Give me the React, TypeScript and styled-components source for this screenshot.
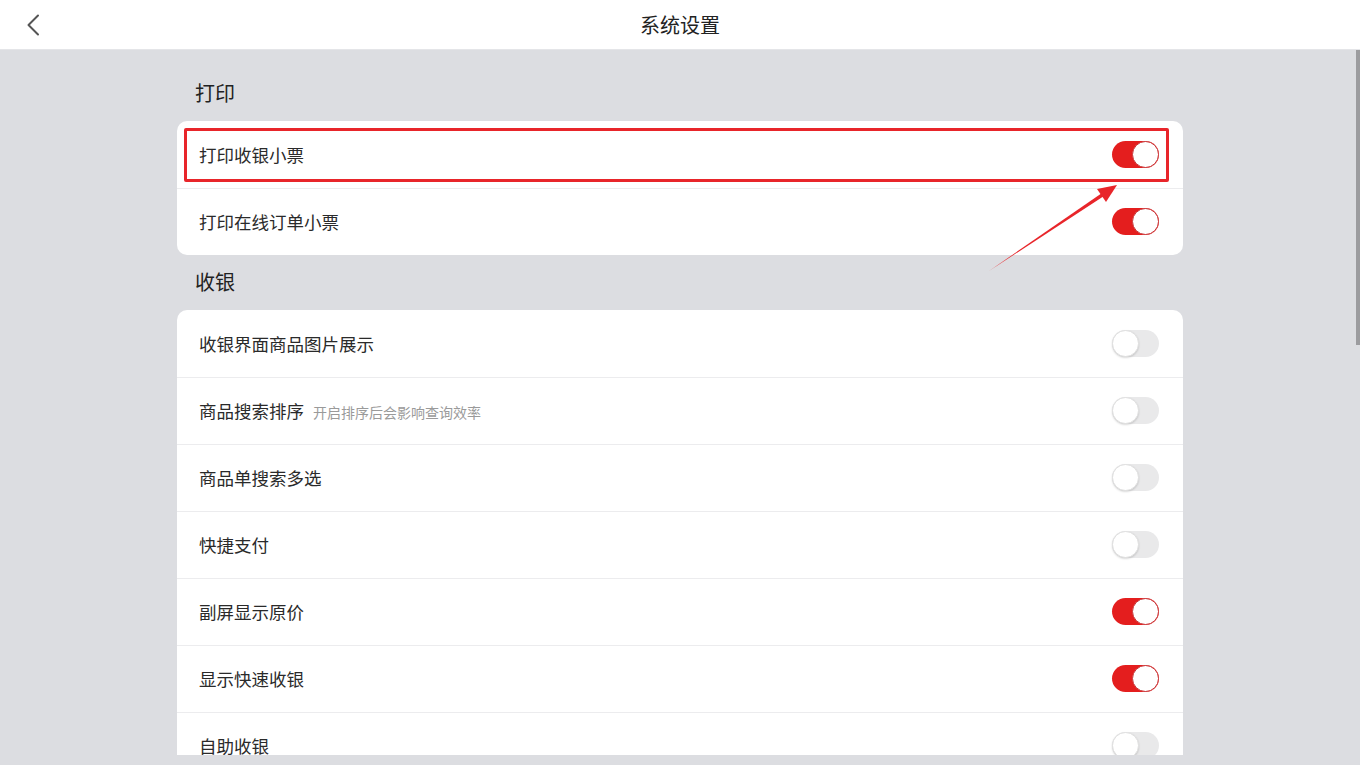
import React from "react";
import styled, { createGlobalStyle } from "styled-components";

const Global = createGlobalStyle`
  html, body { margin: 0; padding: 0; }
  body {
    background: #dcdde1;
    font-family: "Noto Sans CJK SC", "Noto Sans", sans-serif;
    overflow: hidden;
  }
`;

const Page = styled.div`
  width: 1360px;
  height: 765px;
  display: flex;
  flex-direction: column;
  background: #dcdde1;
  position: relative;
  overflow: hidden;
`;

const Header = styled.header`
  height: 49px;
  flex: none;
  background: #fff;
  border-bottom: 1px solid #e4e5e8;
  display: flex;
  align-items: center;
  justify-content: center;
  position: relative;
`;

const BackButton = styled.button`
  position: absolute;
  left: 20px;
  top: 12px;
  width: 26px;
  height: 26px;
  border: 0;
  background: none;
  padding: 0;
  display: flex;
  align-items: center;
  justify-content: center;
`;

const Title = styled.h1`
  margin: 0;
  font-size: 20px;
  font-weight: 400;
  color: #222;
`;

const Scroll = styled.main`
  height: 705px;
  flex: none;
  overflow: hidden;
  position: relative;
`;

const Content = styled.div`
  width: 1006px;
  margin: 0 auto;
  padding-top: 27px;
  display: flex;
  flex-direction: column;
`;

const SectionTitle = styled.div`
  font-size: 20px;
  color: #222;
  padding-left: 18px;
  height: 31px;
  line-height: 31px;
  margin-bottom: 13px;
`;

const Card = styled.div`
  background: #fff;
  border-radius: 10px;
  overflow: hidden;
  margin-bottom: 11px;
`;

const Row = styled.div`
  height: 67px;
  box-sizing: border-box;
  display: flex;
  align-items: center;
  padding: 0 24px 1px 22px;
  & + & { border-top: 1px solid #ececee; }
`;

const Label = styled.span`
  font-size: 17.5px;
  color: #2a2a2a;
  flex: 1;
  display: flex;
  align-items: baseline;
`;

const Hint = styled.span`
  font-size: 14px;
  color: #9a9a9a;
  margin-left: 9px;
`;

const Track = styled.div<{ $on: boolean }>`
  width: 47px;
  height: 27px;
  border-radius: 14px;
  background: ${(p) => (p.$on ? "#e41e1e" : "#e9e9ea")};
  position: relative;
  flex: none;
`;

const Knob = styled.div<{ $on: boolean }>`
  position: absolute;
  top: 0;
  left: ${(p) => (p.$on ? "20px" : "0")};
  width: 27px;
  height: 27px;
  box-sizing: border-box;
  border-radius: 50%;
  background: #fff;
  border: 1px solid ${(p) => (p.$on ? "#c8383a" : "#e0e0e0")};
  box-shadow: ${(p) => (p.$on ? "none" : "0 1px 2px rgba(0,0,0,0.15)")};
`;

const Highlight = styled.div`
  position: absolute;
  left: 184px;
  top: 128px;
  width: 985px;
  height: 54px;
  box-sizing: border-box;
  border: 3px solid #e8252a;
  border-radius: 2px;
  pointer-events: none;
`;

const ArrowSvg = styled.svg`
  position: absolute;
  left: 980px;
  top: 180px;
  pointer-events: none;
`;

const ScrollThumb = styled.div`
  position: absolute;
  right: 0;
  top: 50px;
  width: 4px;
  height: 295px;
  background: #9c9c9f;
`;

const Toggle = ({ on }: { on: boolean }) => (
  <Track $on={on}>
    <Knob $on={on} />
  </Track>
);

type Item = { label: string; hint?: string; on: boolean };

const printItems: Item[] = [
  { label: "打印收银小票", on: true },
  { label: "打印在线订单小票", on: true },
];

const cashItems: Item[] = [
  { label: "收银界面商品图片展示", on: false },
  { label: "商品搜索排序", hint: "开启排序后会影响查询效率", on: false },
  { label: "商品单搜索多选", on: false },
  { label: "快捷支付", on: false },
  { label: "副屏显示原价", on: true },
  { label: "显示快速收银", on: true },
  { label: "自助收银", on: false },
];

const Rows = ({ items }: { items: Item[] }) => (
  <>
    {items.map((it) => (
      <Row key={it.label}>
        <Label>
          {it.label}
          {it.hint && <Hint>{it.hint}</Hint>}
        </Label>
        <Toggle on={it.on} />
      </Row>
    ))}
  </>
);

export default function App() {
  return (
    <>
      <Global />
      <Page>
        <Header>
          <BackButton aria-label="返回">
            <svg width="14" height="22" viewBox="0 0 14 22">
              <path d="M12 1.5 L2.5 11 L12 20.5" fill="none" stroke="#555" strokeWidth="2" strokeLinecap="round" strokeLinejoin="round" />
            </svg>
          </BackButton>
          <Title>系统设置</Title>
        </Header>
        <Scroll>
          <Content>
            <SectionTitle>打印</SectionTitle>
            <Card>
              <Rows items={printItems} />
            </Card>
            <SectionTitle>收银</SectionTitle>
            <Card>
              <Rows items={cashItems} />
            </Card>
          </Content>
        </Scroll>
        <Highlight />
        <ArrowSvg width="150" height="100" viewBox="0 0 150 100">
          <polygon points="9,91 122,13 124,16" fill="#e8252a" />
          <polygon points="137,5 117,9 126,22" fill="#e8252a" />
        </ArrowSvg>
        <ScrollThumb />
      </Page>
    </>
  );
}
